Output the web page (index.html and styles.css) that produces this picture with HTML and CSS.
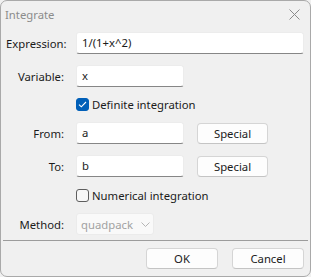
FILE: index.html
```html
<!DOCTYPE html>
<html lang="en">
<head>
  <meta charset="UTF-8" />
  <title>Integrate</title>
  <link rel="stylesheet" href="styles.css">
</head>
<body>
  <div class="dialog">
    <div class="titlebar">
      <span class="title">Integrate</span>
      <svg class="close" width="11" height="11" viewBox="0 0 11 11">
        <path d="M0.5 0.5 L10.5 10.5 M10.5 0.5 L0.5 10.5" stroke="#8a8a8a" stroke-width="1" fill="none"/>
      </svg>
    </div>

    <div class="form">
      <div class="row">
        <label class="lbl">Expression:</label>
        <div class="field wide">1/(1+x^2)</div>
      </div>
      <div class="row gap-l">
        <label class="lbl">Variable:</label>
        <div class="field">x</div>
      </div>
      <div class="row gap-s">
        <span class="lbl"></span>
        <span class="check on">
          <svg width="9" height="7" viewBox="0 0 9 7"><path d="M1 3.6 L3.3 5.8 L8 1" stroke="#fff" stroke-width="1.1" fill="none"/></svg>
        </span>
        <span class="check-text">Definite integration</span>
      </div>
      <div class="row gap-m">
        <label class="lbl">From:</label>
        <div class="field">a</div>
        <button class="btn special">Special</button>
      </div>
      <div class="row gap-l">
        <label class="lbl">To:</label>
        <div class="field">b</div>
        <button class="btn special">Special</button>
      </div>
      <div class="row gap-m">
        <span class="lbl"></span>
        <span class="check"></span>
        <span class="check-text">Numerical integration</span>
      </div>
      <div class="row gap-m">
        <label class="lbl">Method:</label>
        <div class="combo">
          <span>quadpack</span>
          <svg width="9" height="5" viewBox="0 0 9 5"><path d="M0.5 0.5 L4.5 4.5 L8.5 0.5" stroke="#b5b5b5" stroke-width="1" fill="none"/></svg>
        </div>
      </div>
    </div>

    <div class="separator"></div>

    <div class="actions">
      <button class="btn action">OK</button>
      <button class="btn action">Cancel</button>
    </div>
  </div>
</body>
</html>
```

FILE: styles.css
```css
html, body {
  margin: 0;
  padding: 0;
  background: #f0f0f0;
}
body {
  font-family: 'Noto Sans', sans-serif;
  font-size: 11.3px;
  color: #1b1b1b;
}
.dialog {
  box-sizing: border-box;
  width: 311px;
  height: 277px;
  background: #f0f0f0;
  border: 1px solid #a9a9a9;
  border-radius: 7px;
  overflow: hidden;
}
.titlebar {
  height: 31px;
  display: flex;
  align-items: center;
  justify-content: space-between;
  padding: 0 10px 4px 4px;
  box-sizing: border-box;
}
.title {
  color: #8c8c8c;
}
.close {
  display: block;
}
.form {
  display: flex;
  flex-direction: column;
  padding: 0 6px 0 5px;
}
.row {
  display: flex;
  align-items: center;
  height: 22px;
}
.gap-s { margin-top: 6px; }
.gap-m { margin-top: 7px; }
.gap-l { margin-top: 11px; }
.lbl {
  width: 58px;
  margin-right: 12px;
  text-align: right;
  flex-shrink: 0;
}
.field {
  box-sizing: border-box;
  width: 108px;
  height: 22px;
  background: #fff;
  border: 1px solid #ececec;
  border-bottom: 1px solid #868686;
  border-radius: 3px;
  padding: 0 5px;
  line-height: 20px;
}
.field.wide {
  width: 228px;
}
.btn {
  box-sizing: border-box;
  font-family: inherit;
  font-size: inherit;
  color: #1b1b1b;
  background: #fdfdfd;
  border: 1px solid #d5d5d5;
  border-bottom-color: #c4c4c4;
  border-radius: 4px;
  padding: 0;
  height: 21px;
}
.special {
  width: 71px;
  margin-left: 13px;
}
.check {
  box-sizing: border-box;
  width: 13px;
  height: 13px;
  border: 1px solid #5e5e5e;
  border-radius: 3px;
  background: #f7f7f7;
  display: flex;
  align-items: center;
  justify-content: center;
  margin-right: 3px;
}
.check.on {
  background: #005fb8;
  border-color: #005fb8;
}
.combo {
  box-sizing: border-box;
  width: 78px;
  height: 22px;
  background: #f9f9f9;
  border: 1px solid #ebebeb;
  border-radius: 3px;
  display: flex;
  align-items: center;
  justify-content: space-between;
  padding: 0 3px 0 4px;
  color: #a2a2a2;
}
.separator {
  height: 1px;
  background: #9c9c9c;
  margin: 5px 2px 0 2px;
}
.actions {
  display: flex;
  justify-content: flex-end;
  gap: 14px;
  padding: 7px 6px 0 0;
}
.action {
  width: 72px;
}
```
